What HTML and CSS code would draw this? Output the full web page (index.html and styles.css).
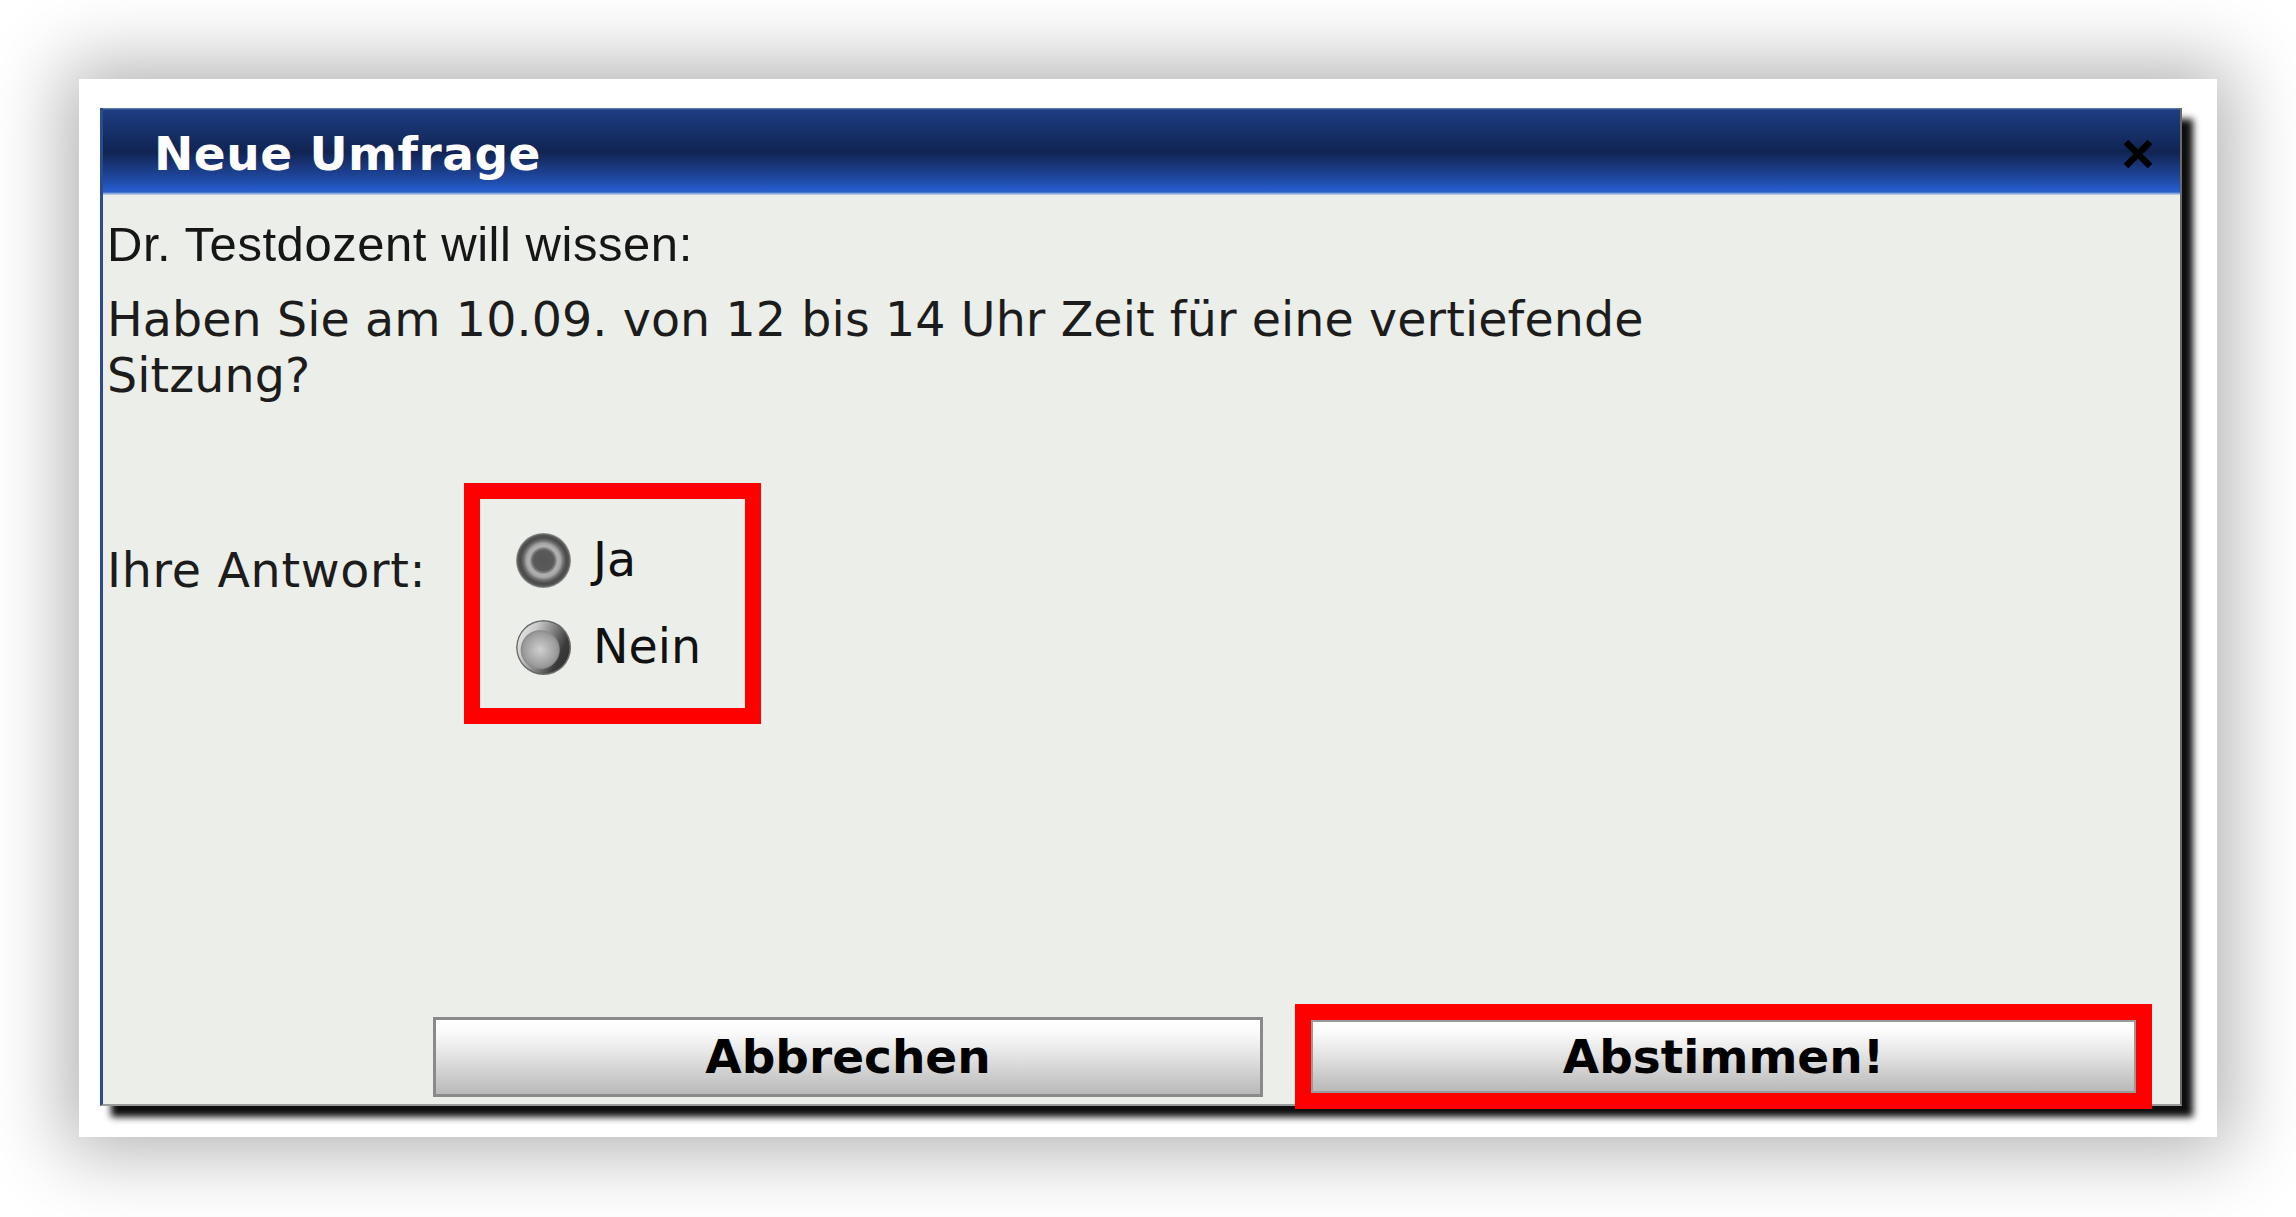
FILE: index.html
```html
<!DOCTYPE html>
<html lang="de">
<head>
<meta charset="utf-8">
<title>Neue Umfrage</title>
<link rel="stylesheet" href="styles.css">
</head>
<body>
<div class="page">
  <div class="card">
    <div class="dialog">
      <div class="titlebar">
        <span class="title">Neue Umfrage</span>
        <svg class="close" width="32" height="32" viewBox="0 0 32 32" aria-label="Schließen">
          <path d="M4 4 L28 28 M28 4 L4 28" stroke="#000" stroke-width="6.5" stroke-linecap="butt" fill="none"/>
        </svg>
      </div>
      <div class="body">
        <p class="asker">Dr. Testdozent will wissen:</p>
        <p class="question">Haben Sie am 10.09. von 12 bis 14 Uhr Zeit für eine vertiefende Sitzung?</p>
        <div class="answer">
          <span class="answer-label">Ihre Antwort:</span>
          <div class="options">
            <div class="option"><span class="radio radio-checked"></span><span class="option-text">Ja</span></div>
            <div class="option"><span class="radio radio-empty"></span><span class="option-text">Nein</span></div>
          </div>
        </div>
        <div class="actions">
          <button class="btn btn-cancel">Abbrechen</button>
          <div class="mark"><button class="btn btn-vote">Abstimmen!</button></div>
        </div>
      </div>
    </div>
  </div>
</div>
</body>
</html>
```
FILE: styles.css
```css
html, body {
  margin: 0;
  padding: 0;
  background: #ffffff;
}

body {
  width: 2296px;
  height: 1217px;
  overflow: hidden;
}

.page {
  box-sizing: border-box;
  width: 2296px;
  height: 1217px;
  padding: 79px 79px 0 79px;
}

.card {
  box-sizing: border-box;
  width: 2138px;
  height: 1058px;
  background: #ffffff;
  box-shadow: 0 0 70px 15px rgba(0, 0, 0, 0.3);
  padding: 29px 0 0 21px;
}

.dialog {
  box-sizing: border-box;
  width: 2082px;
  height: 998px;
  display: flex;
  flex-direction: column;
  background: #eceee9;
  border-left: 3px solid #2b4c8c;
  border-right: 2px solid #6a6a6a;
  border-bottom: 2px solid #9a9a9a;
  box-shadow: 11px 11px 7px rgba(0, 0, 0, 0.95);
}

.titlebar {
  box-sizing: border-box;
  height: 87px;
  flex: none;
  display: flex;
  align-items: center;
  justify-content: space-between;
  padding: 4px 26px 0 51px;
  background: linear-gradient(to bottom,
    #6f86b8 0px, #1f3e82 2px, #1a3676 12px, #12285a 38px, #112452 44px,
    #19377c 58px, #1f4aa4 72px, #2358c6 80px, #2a5fcc 84px, #a9bde0 86px, #c8d4e8 87px);
}

.title {
  font-family: "DejaVu Sans", Verdana, sans-serif;
  font-weight: bold;
  font-size: 47px;
  line-height: 56px;
  letter-spacing: 0.5px;
  color: #ffffff;
}

.close {
  display: block;
  flex: none;
  filter: blur(0.6px);
}

.body {
  flex: 1;
  display: flex;
  flex-direction: column;
  padding: 21px 0 0 4px;
  min-height: 0;
}

.asker {
  margin: 0;
  font-family: "Liberation Sans", Arial, sans-serif;
  font-size: 49px;
  line-height: 56px;
  letter-spacing: 0.55px;
  color: #161616;
}

.question {
  margin: 20px 0 0 0;
  max-width: 1600px;
  font-family: "DejaVu Sans", Verdana, sans-serif;
  font-size: 47.5px;
  line-height: 56px;
  letter-spacing: 0.1px;
  color: #1c1c1c;
}

.answer {
  display: flex;
  align-items: flex-start;
  margin-top: 79px;
}

.answer-label {
  width: 357px;
  flex: none;
  margin-top: 60px;
  font-family: "DejaVu Sans", Verdana, sans-serif;
  font-size: 47.5px;
  line-height: 56px;
  letter-spacing: 0.7px;
  color: #1c1c1c;
}

.options {
  box-sizing: border-box;
  width: 297px;
  height: 241px;
  border: 16px solid #ff0000;
  padding: 33px 0 0 36px;
  display: flex;
  flex-direction: column;
  gap: 31px;
}

.option {
  display: flex;
  align-items: center;
  gap: 22px;
  height: 56px;
}

.option-text {
  font-family: "DejaVu Sans", Verdana, sans-serif;
  font-size: 47.5px;
  line-height: 56px;
  color: #111111;
}

.radio {
  flex: none;
  width: 55px;
  height: 55px;
  border-radius: 50%;
  filter: blur(0.7px);
}

.radio-checked {
  background: radial-gradient(circle at 50% 50%,
    #555555 0px, #5a5a5a 10px, #7a7a7a 12px, #b2b2b2 14px, #a6a6a6 17px,
    #6c6c6c 20px, #4a4a4a 23px, #555555 25.5px, #9a9a9a 27.5px);
}

.radio-empty {
  background:
    radial-gradient(circle at 44% 54%, #cfcfcf 0px, #b0b0b0 10px, #9a9a9a 17px, #8a8a8a 19px, rgba(138, 138, 138, 0) 20px),
    linear-gradient(115deg, #f4f4f4 0%, #c8c8c8 30%, #7a7a7a 55%, #3a3a3a 75%, #2c2c2c 100%);
  box-shadow: inset 0 0 0 1.5px #6a6a6a;
}

.actions {
  margin-top: auto;
  margin-bottom: -5px;
  display: flex;
  align-items: center;
  justify-content: flex-end;
  padding-right: 28px;
}

.btn {
  box-sizing: border-box;
  margin: 0;
  padding: 0;
  font-family: "DejaVu Sans", Verdana, sans-serif;
  font-weight: bold;
  font-size: 47px;
  color: #000000;
  background: linear-gradient(to bottom, #ffffff 0%, #fbfbfb 15%, #e6e6e6 45%, #cdcdcd 75%, #b9b9b9 100%);
  cursor: pointer;
}

.btn-cancel {
  width: 830px;
  height: 80px;
  margin-right: 32px;
  border: 3px solid #8a8a8a;
}

.mark {
  border: 16px solid #ff0000;
  display: flex;
}

.btn-vote {
  width: 825px;
  height: 73px;
  border: 2px solid #9a9a9a;
}
```
